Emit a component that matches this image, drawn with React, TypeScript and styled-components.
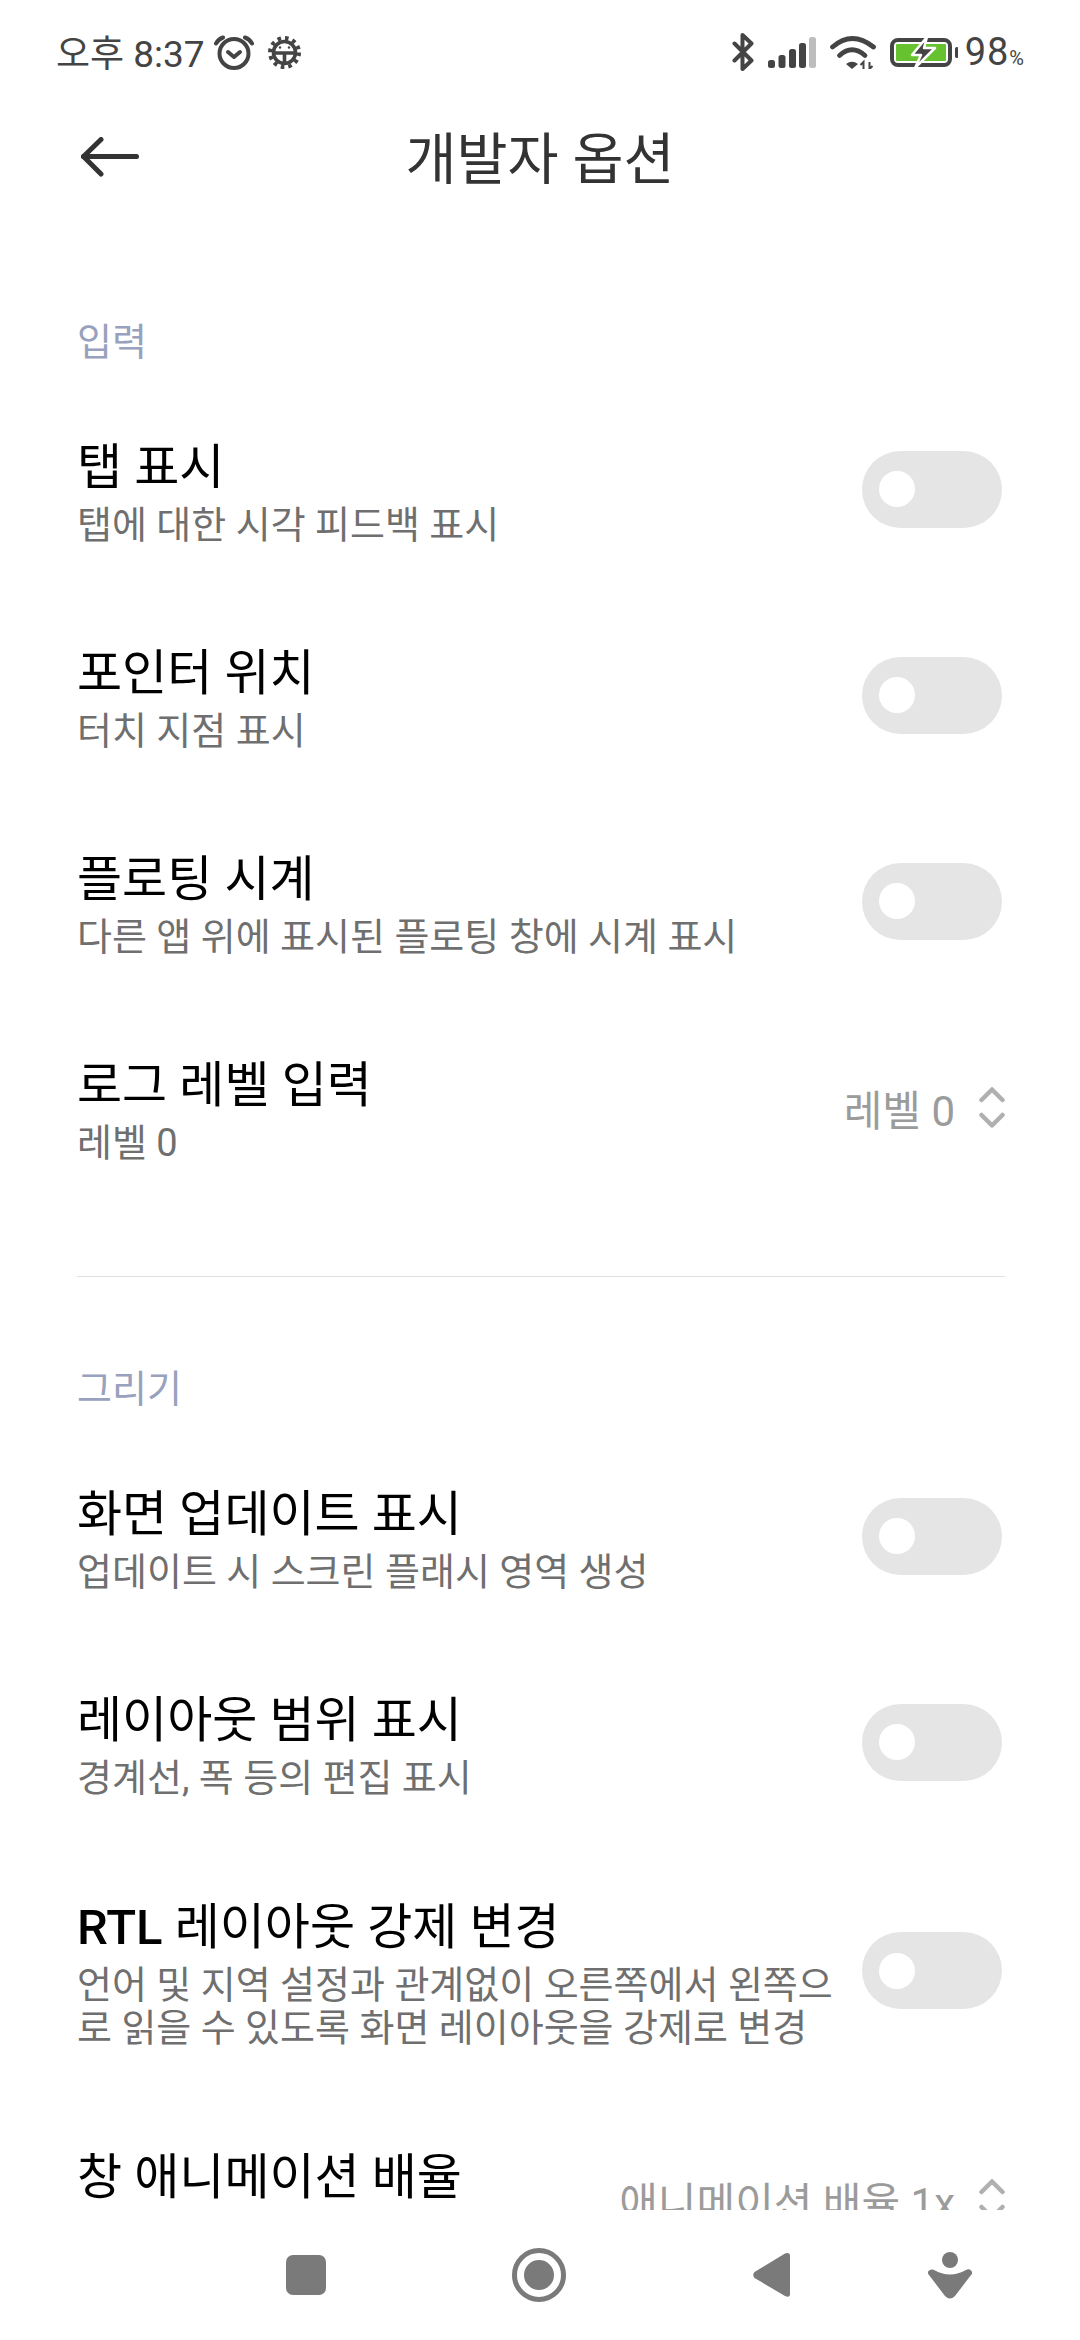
import React from "react";
import styled, { createGlobalStyle } from "styled-components";

const GlobalStyle = createGlobalStyle`
  html, body {
    margin: 0;
    padding: 0;
    background: #fff;
  }
  body {
    font-family: "Roboto", "Noto Sans CJK KR", sans-serif;
  }
`;

const Screen = styled.div`
  width: 1080px;
  height: 2340px;
  display: flex;
  flex-direction: column;
  background: #fff;
  overflow: hidden;
`;

const StatusBar = styled.div`
  height: 104px;
  flex: none;
  display: flex;
  align-items: center;
  justify-content: space-between;
  padding: 0 56px 0 56px;
  color: #444;
`;

const StatusGroup = styled.div<{ $gap: number }>`
  display: flex;
  align-items: center;
  gap: ${(p) => p.$gap}px;
`;

const Clock = styled.span`
  font-size: 37px;
  margin-right: -5px;
  margin-bottom: 2px;
`;

const Percent = styled.span`
  font-size: 38px;
  letter-spacing: 1px;
  margin-left: -7px;
  small {
    font-size: 20px;
    letter-spacing: 0;
  }
`;

const Header = styled.div`
  height: 108px;
  flex: none;
  display: grid;
  grid-template-columns: 1fr auto 1fr;
  align-items: center;
`;

const BackIcon = styled.svg`
  margin-left: 81px;
  margin-bottom: 2px;
`;

const Title = styled.h1`
  margin: 0 0 6px;
  font-size: 55.5px;
  font-weight: 400;
  color: #333;
`;

const Content = styled.div`
  flex: none;
  height: 1998px;
  overflow: hidden;
  padding: 108px 77px 0;
  box-sizing: border-box;
`;

const SectionLabel = styled.div`
  font-size: 38px;
  line-height: 44px;
  color: #98a1bd;
  margin-bottom: 22px;
`;

const Divider = styled.hr`
  margin: 66px -2px 90px 0;
  border: none;
  height: 1px;
  background: #e0e0e0;
`;

const Row = styled.div<{ $tall?: boolean }>`
  display: flex;
  align-items: center;
  justify-content: space-between;
  padding: ${(p) => (p.$tall ? "45.75px" : "44.75px")} 0;
`;

const RowText = styled.div`
  flex: 1;
  min-width: 0;
  padding-top: 3px;
`;

const RowTitle = styled.div`
  font-size: 49px;
  line-height: 68px;
  color: #000;
  b {
    font-weight: 500;
  }
`;

const RowSub = styled.div`
  margin-top: 2.5px;
  font-size: 38px;
  line-height: 43px;
  color: #6f6f6f;
  max-width: 770px;
`;

const SwitchTrack = styled.div`
  flex: none;
  width: 140px;
  height: 77px;
  margin-right: 1px;
  border-radius: 39px;
  background: #e5e5e5;
  display: flex;
  align-items: center;
  padding-left: 17px;
  box-sizing: border-box;
`;

const SwitchKnob = styled.div`
  width: 36px;
  height: 36px;
  border-radius: 50%;
  background: #fff;
`;

const ValueBox = styled.div`
  flex: none;
  display: flex;
  align-items: center;
  gap: 24px;
  margin-right: -2px;
  font-size: 42px;
  color: #9b9b9b;
`;

const NavBar = styled.div`
  flex: 1;
  display: flex;
  align-items: center;
  padding-left: 286px;
`;

const NavIcon = styled.svg<{ $gap?: number }>`
  flex: none;
  margin-right: ${(p) => p.$gap ?? 0}px;
`;

const Switch = () => (
  <SwitchTrack>
    <SwitchKnob />
  </SwitchTrack>
);

const Chevrons = () => (
  <svg width="26" height="41" viewBox="0 0 26 41" fill="none" stroke="#b0b0b0" strokeWidth="4.5" strokeLinecap="round" strokeLinejoin="round">
    <path d="M2.5 13 13 2.5 23.5 13" />
    <path d="M2.5 28 13 38.5 23.5 28" />
  </svg>
);

const AlarmIcon = () => (
  <svg width="40" height="35" viewBox="0 0 40 35" fill="none" stroke="#444" strokeWidth="4" strokeLinecap="round" strokeLinejoin="round">
    <circle cx="20" cy="18.5" r="14.5" />
    <path d="M14 17l6 5 6-5" />
    <path d="M2 8.5Q4.5 4 9 2.5" />
    <path d="M38 8.5Q35.5 4 31 2.5" />
  </svg>
);

const DebugIcon = () => (
  <svg width="33" height="33" viewBox="0 0 33 33" fill="none" stroke="#444" strokeWidth="3.6">
    <circle cx="16.5" cy="16.5" r="11" />
    <path d="M5.5 17h22M16.5 17v11" />
    <circle cx="16.5" cy="16.5" r="14.5" strokeWidth="4" strokeDasharray="3.6 4" />
    <circle cx="12" cy="11.5" r="1.2" fill="#444" stroke="none" />
    <circle cx="21" cy="11.5" r="1.2" fill="#444" stroke="none" />
  </svg>
);

const BluetoothIcon = () => (
  <svg width="22" height="38" viewBox="0 0 22 38" fill="none" stroke="#444" strokeWidth="4" strokeLinecap="round" strokeLinejoin="round">
    <path d="M2.5 10.5 19.5 27.5 10.5 36V2L19.5 10.5 2.5 27.5" />
  </svg>
);

const SignalIcon = () => (
  <svg width="48" height="31" viewBox="0 0 48 31" fill="#444">
    <rect x="0" y="23" width="7" height="8" rx="2.5" />
    <rect x="10.5" y="18" width="7" height="13" rx="2.5" />
    <rect x="21" y="12" width="7" height="19" rx="2.5" />
    <rect x="31" y="6" width="7" height="25" rx="2.5" />
    <rect x="41" y="0" width="7" height="31" rx="2.5" fill="#bdbdbd" />
  </svg>
);

const WifiIcon = () => (
  <svg width="46" height="33" viewBox="0 0 46 33" fill="none" stroke="#444" strokeWidth="4.8" strokeLinecap="round">
    <path d="M2.5 11Q22-6 43.5 11" />
    <path d="M9.5 19.5Q22 8 35 19.5" />
    <path d="M22 33l-6-5q6-4.5 12 0z" fill="#444" stroke="none" />
    <path d="M33.5 33v-7l-3 3M39.5 26v7l3-3" strokeWidth="2" strokeLinecap="butt" />
  </svg>
);

const BatteryIcon = () => (
  <svg width="68" height="31" viewBox="0 0 68 31" fill="none">
    <rect x="2" y="3" width="58" height="25" rx="6" stroke="#444" strokeWidth="4" />
    <rect x="6" y="7" width="50" height="17" rx="1" fill="#67c22f" />
    <rect x="65" y="10" width="3.5" height="11" rx="1.7" fill="#444" />
    <path d="M37 0 22 18h9l-6 13 20-20H34z" fill="#444" stroke="#fff" strokeWidth="2.5" strokeLinejoin="round" />
  </svg>
);

const BackArrow = () => (
  <BackIcon width="58" height="40" viewBox="0 0 58 40" fill="none" stroke="#333" strokeWidth="5" strokeLinecap="round" strokeLinejoin="round">
    <path d="M2.5 19.5h53" />
    <path d="M20 2.5 2.5 19.5 20 37" />
  </BackIcon>
);

export default function App() {
  return (
    <>
      <GlobalStyle />
      <Screen>
        <StatusBar>
          <StatusGroup $gap={14}>
            <Clock>오후 8:37</Clock>
            <AlarmIcon />
            <DebugIcon />
          </StatusGroup>
          <StatusGroup $gap={14}>
            <BluetoothIcon />
            <SignalIcon />
            <WifiIcon />
            <BatteryIcon />
            <Percent>
              98<small>%</small>
            </Percent>
          </StatusGroup>
        </StatusBar>
        <Header>
          <BackArrow />
          <Title>개발자 옵션</Title>
        </Header>
        <Content>
          <SectionLabel>입력</SectionLabel>
          <Row>
            <RowText>
              <RowTitle>탭 표시</RowTitle>
              <RowSub>탭에 대한 시각 피드백 표시</RowSub>
            </RowText>
            <Switch />
          </Row>
          <Row>
            <RowText>
              <RowTitle>포인터 위치</RowTitle>
              <RowSub>터치 지점 표시</RowSub>
            </RowText>
            <Switch />
          </Row>
          <Row>
            <RowText>
              <RowTitle>플로팅 시계</RowTitle>
              <RowSub>다른 앱 위에 표시된 플로팅 창에 시계 표시</RowSub>
            </RowText>
            <Switch />
          </Row>
          <Row>
            <RowText>
              <RowTitle>로그 레벨 입력</RowTitle>
              <RowSub>레벨 0</RowSub>
            </RowText>
            <ValueBox>
              레벨 0
              <Chevrons />
            </ValueBox>
          </Row>
          <Divider />
          <SectionLabel>그리기</SectionLabel>
          <Row>
            <RowText>
              <RowTitle>화면 업데이트 표시</RowTitle>
              <RowSub>업데이트 시 스크린 플래시 영역 생성</RowSub>
            </RowText>
            <Switch />
          </Row>
          <Row>
            <RowText>
              <RowTitle>레이아웃 범위 표시</RowTitle>
              <RowSub>경계선, 폭 등의 편집 표시</RowSub>
            </RowText>
            <Switch />
          </Row>
          <Row $tall>
            <RowText>
              <RowTitle>
                <b>RTL</b> 레이아웃 강제 변경
              </RowTitle>
              <RowSub>언어 및 지역 설정과 관계없이 오른쪽에서 왼쪽으로 읽을 수 있도록 화면 레이아웃을 강제로 변경</RowSub>
            </RowText>
            <Switch />
          </Row>
          <Row>
            <RowText>
              <RowTitle>창 애니메이션 배율</RowTitle>
              <RowSub>&nbsp;</RowSub>
            </RowText>
            <ValueBox>
              애니메이션 배율 1x
              <Chevrons />
            </ValueBox>
          </Row>
        </Content>
        <NavBar>
          <NavIcon $gap={186} width="40" height="40" viewBox="0 0 40 40" fill="#7a7a7a">
            <rect width="40" height="40" rx="7" />
          </NavIcon>
          <NavIcon $gap={187} width="54" height="54" viewBox="0 0 54 54" fill="#7a7a7a">
            <circle cx="27" cy="27" r="24.5" fill="none" stroke="#7a7a7a" strokeWidth="5" />
            <circle cx="27" cy="27" r="15" />
          </NavIcon>
          <NavIcon $gap={138} width="37" height="46" viewBox="0 0 37 46" fill="#7a7a7a">
            <path d="M1.5 20 32 1.5Q37-.5 37 4v38q0 4-5 2L1.5 26Q-1 23 1.5 20z" />
          </NavIcon>
          <NavIcon width="44" height="47" viewBox="0 0 44 47" fill="#7a7a7a">
            <circle cx="22" cy="8" r="8" />
            <path d="M5 17.5Q14 22.5 22 22.5T39 17.5Q42 16.5 43.5 19T43 23L27 44Q22 49 17 44L1 23Q-1 21 .5 19T5 17.5z" />
          </NavIcon>
        </NavBar>
      </Screen>
    </>
  );
}
